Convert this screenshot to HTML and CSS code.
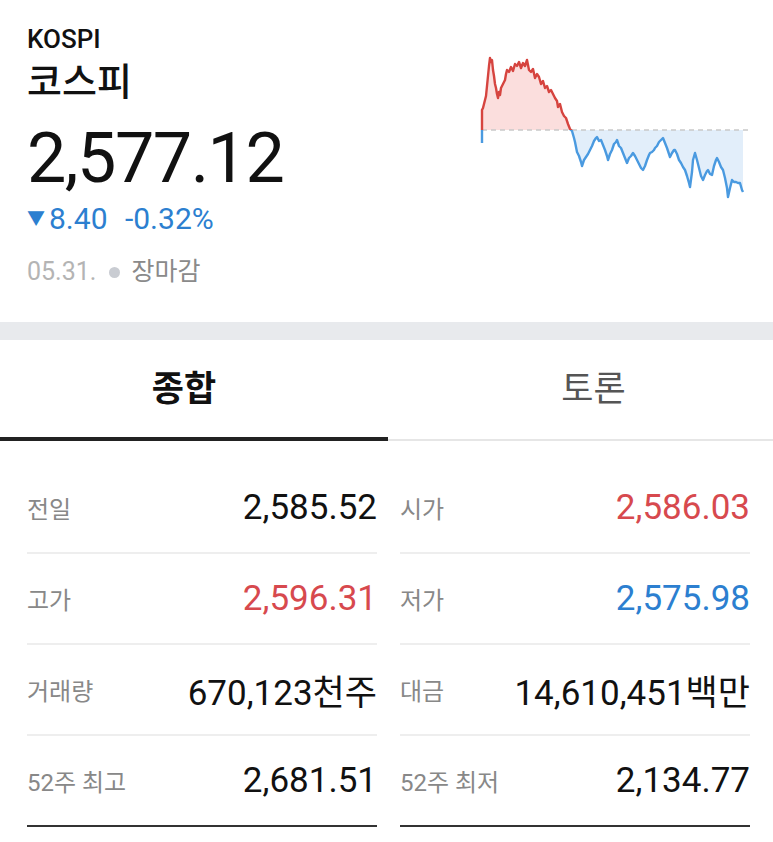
FILE: index.html
```html
<!DOCTYPE html>
<html lang="ko">
<head>
  <meta charset="utf-8">
  <title>코스피</title>
  <meta name="viewport" content="width=device-width, initial-scale=1.0">
  <link rel="stylesheet" href="styles.css">
</head>
<body>
  <div class="summary">
    <div class="quote">
      <div class="code">KOSPI</div>
      <h1 class="name">코스피</h1>
      <div class="price">2,577.12</div>
      <div class="change down">
        <span class="arrow">▼</span><span>8.40</span>
        <span class="rate">-0.32%</span>
      </div>
      <div class="status">
        <span class="date">05.31.</span>
        <span class="dot"></span>
        <span class="state">장마감</span>
      </div>
    </div>
    <svg class="chart" width="280" height="160" viewBox="475 48 280 160">
      <defs>
        <clipPath id="above"><rect x="475" y="40" width="280" height="90"/></clipPath>
        <clipPath id="below"><rect x="475" y="130" width="280" height="80"/></clipPath>
      </defs>
      <polygon clip-path="url(#above)" fill="#fbdedd"
        points="482,130 482,143 482,110 483,108 484,104 485,100 486,96 487,86 488,76 489,66 490,58 491,62 492,60 493,70 494,76 495,84 496,88 497,94 498,98 499,92 500,95 501,88 503,84 505,80 506,74 507,70 509,72 511,67 513,71 515,64 517,66 519,62 521,68 523,63 525,66 527,60 529,70 531,72 533,69 535,78 537,74 539,77 541,84 543,81 545,88 547,86 549,92 551,90 553,94 555,98 557,101 558,107 560,104 562,112 564,116 566,118 568,124 570,129 572,130 743,130"/>
      <polygon clip-path="url(#below)" fill="#e2eefa"
        points="482,130 572,130 574,138 575,142 577,152 579,156 581,162 582,166 584,160 586,157 588,154 590,150 592,146 594,141 596,138 597,137 599,141 601,140 603,145 605,150 607,156 608,160 610,154 612,150 614,144 616,142 617,140 619,146 621,148 623,153 625,158 627,163 629,158 631,156 633,153 635,156 637,160 639,164 641,168 643,170 645,166 647,160 649,155 650,153 652,152 654,150 655,148 657,146 659,142 661,140 663,138 665,143 667,148 669,154 670,157 672,153 674,150 675,150 677,154 679,160 681,163 683,167 685,170 687,176 689,183 690,187 692,172 693,160 695,153 697,160 699,168 701,176 703,180 705,175 707,171 708,170 710,174 712,175 714,166 716,160 717,158 719,162 721,167 723,170 725,178 727,188 728,197 730,188 732,180 734,182 736,182 738,183 740,183 742,190 743,192 743,130"/>
      <line x1="482" y1="130" x2="751" y2="130" stroke="#c9c9c9" stroke-width="1.5" stroke-dasharray="5 4"/>
      <polyline clip-path="url(#above)" fill="none" stroke="#d6443f" stroke-width="2.4" stroke-linejoin="round"
        points="482,143 482,110 483,108 484,104 485,100 486,96 487,86 488,76 489,66 490,58 491,62 492,60 493,70 494,76 495,84 496,88 497,94 498,98 499,92 500,95 501,88 503,84 505,80 506,74 507,70 509,72 511,67 513,71 515,64 517,66 519,62 521,68 523,63 525,66 527,60 529,70 531,72 533,69 535,78 537,74 539,77 541,84 543,81 545,88 547,86 549,92 551,90 553,94 555,98 557,101 558,107 560,104 562,112 564,116 566,118 568,124 570,129 572,131"/>
      <polyline clip-path="url(#below)" fill="none" stroke="#4a9ae0" stroke-width="2.4" stroke-linejoin="round"
        points="482,143 482,110 570,129 572,131 574,138 575,142 577,152 579,156 581,162 582,166 584,160 586,157 588,154 590,150 592,146 594,141 596,138 597,137 599,141 601,140 603,145 605,150 607,156 608,160 610,154 612,150 614,144 616,142 617,140 619,146 621,148 623,153 625,158 627,163 629,158 631,156 633,153 635,156 637,160 639,164 641,168 643,170 645,166 647,160 649,155 650,153 652,152 654,150 655,148 657,146 659,142 661,140 663,138 665,143 667,148 669,154 670,157 672,153 674,150 675,150 677,154 679,160 681,163 683,167 685,170 687,176 689,183 690,187 692,172 693,160 695,153 697,160 699,168 701,176 703,180 705,175 707,171 708,170 710,174 712,175 714,166 716,160 717,158 719,162 721,167 723,170 725,178 727,188 728,197 730,188 732,180 734,182 736,182 738,183 740,183 742,190 743,192"/>
    </svg>
  </div>

  <div class="band"></div>

  <div class="tabs">
    <div class="tab active">종합</div>
    <div class="tab other">토론</div>
  </div>

  <div class="stats">
    <ul class="col">
      <li><span class="label">전일</span><span class="value">2,585.52</span></li>
      <li><span class="label">고가</span><span class="value up">2,596.31</span></li>
      <li><span class="label">거래량</span><span class="value">670,123천주</span></li>
      <li><span class="label">52주 최고</span><span class="value">2,681.51</span></li>
    </ul>
    <ul class="col">
      <li><span class="label">시가</span><span class="value up">2,586.03</span></li>
      <li><span class="label">저가</span><span class="value down">2,575.98</span></li>
      <li><span class="label">대금</span><span class="value">14,610,451백만</span></li>
      <li><span class="label">52주 최저</span><span class="value">2,134.77</span></li>
    </ul>
  </div>
</body>
</html>
```

FILE: styles.css
```css
body {
  margin: 0;
  font-family: Roboto, "Noto Sans CJK KR", sans-serif;
  color: #111;
  background: #fff;
}
.summary {
  display: flex;
  justify-content: space-between;
  padding: 24px 18px 0 27px;
  height: 322px;
  box-sizing: border-box;
}
.code {
  font-size: 26px;
  line-height: 30px;
  font-weight: 500;
}
.name {
  margin: 2px 0 0;
  font-size: 38px;
  line-height: 52px;
  font-weight: 500;
}
.price {
  font-size: 70px;
  line-height: 80px;
  margin-top: 10px;
  letter-spacing: -1.5px;
}
.change {
  font-size: 30px;
  line-height: 36px;
  margin-top: 3px;
}
.change .arrow {
  font-size: 18px;
  vertical-align: 4px;
  margin-right: 4px;
}
.change .rate {
  margin-left: 10px;
}
.down { color: #2c7fd0; }
.up { color: #d7494e; }
.status {
  display: flex;
  align-items: center;
  margin-top: 20px;
  font-size: 25px;
  line-height: 30px;
}
.date { color: #b4b4b4; }
.dot {
  width: 11px;
  height: 11px;
  border-radius: 50%;
  background: #c9ccd2;
  margin: 0 11px 0 13px;
}
.state { color: #8a8a8a; }
.chart {
  margin-top: 24px;
}
.band {
  height: 18px;
  background: #e8eaed;
}
.tabs {
  display: grid;
  grid-template-columns: 388px 1fr;
  border-bottom: 2px solid #e6e6e6;
}
.tab {
  text-align: center;
  font-size: 35px;
  line-height: 99px;
  color: #555;
}
.tab.active {
  color: #111;
  font-weight: 700;
  box-shadow: inset 0 -4px 0 #222;
  margin-bottom: -2px;
  padding: 0 20px 2px 0;
}
.tab.other {
  padding-left: 26px;
}
.stats {
  display: grid;
  grid-template-columns: 1fr 1fr;
  gap: 23px;
  padding: 22px 23px 0 27px;
}
.col {
  list-style: none;
  margin: 0;
  padding: 0;
}
.col li {
  display: flex;
  justify-content: space-between;
  align-items: center;
  height: 89px;
  border-bottom: 2px solid #eeeeee;
}
.col li:last-child {
  border-bottom-color: #333;
}
.label {
  font-size: 24px;
  color: #888;
}
.value {
  font-size: 35px;
}
```
